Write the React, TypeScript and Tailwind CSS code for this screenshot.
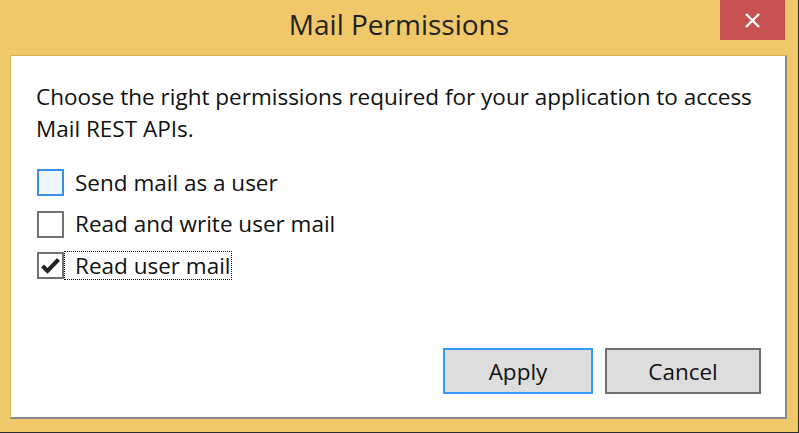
import { useState } from "react";

const permissions = [
  { id: "send", label: "Send mail as a user" },
  { id: "readwrite", label: "Read and write user mail" },
  { id: "read", label: "Read user mail" },
];

const CheckBox = ({ checked, hover }: { checked: boolean; hover: boolean }) => (
  <span
    className={
      hover
        ? "flex h-[27px] w-[27px] shrink-0 items-center justify-center border-2 border-[#3c8fe8] bg-[#f0f6ff]"
        : "flex h-[27px] w-[27px] shrink-0 items-center justify-center border-2 border-[#707070] bg-white"
    }>
    {checked && (
      <svg width="19" height="17" viewBox="0 0 19 17">
        <path
          d="M1.5 9 L6.5 14 L17.5 2.5"
          fill="none"
          stroke="#222"
          strokeWidth="4"
          strokeLinejoin="miter"
        />
      </svg>
    )}
  </span>
);

const App = () => {
  const [checked, setChecked] = useState<Record<string, boolean>>({
    send: false,
    readwrite: false,
    read: true,
  });

  return (
    <div
      className="flex h-[433px] w-[799px] flex-col border-r border-b border-[#2b2b2b] bg-[#f0c86a] text-[#111]"
      style={{ fontFamily: '"Open Sans", "Noto Sans", sans-serif' }}>
      <div className="relative flex h-[55px] shrink-0 items-start justify-center">
        <h1 className="pt-[6px] text-[28px] leading-[36px] text-[#222]">
          Mail Permissions
        </h1>
        <button className="absolute top-0 right-[13px] flex h-[40px] w-[65px] items-center justify-center bg-[#c75050]">
          <svg width="15" height="15" viewBox="0 0 15 15">
            <path
              d="M1 1 L14 14 M14 1 L1 14"
              stroke="#fff"
              strokeWidth="2.4"
            />
          </svg>
        </button>
      </div>

      <div className="ml-[10px] mr-[11px] flex h-[364px] shrink-0 flex-col border-t border-l border-[#d6b25e] border-r-2 border-b-2 border-r-[#8a8a8a] border-b-[#8a8a8a] bg-white">
        <p className="pt-[25px] pl-[25px] text-[22.5px] leading-[31.5px]">
          Choose the right permissions required for your application to
          access
          <br />
          Mail REST APIs.
        </p>

        <ul className="mt-[24px] flex flex-col gap-[12.5px] pl-[26px]">
          {permissions.map((item, index) => (
            <li
              key={item.id}
              className="flex h-[29px] cursor-default items-center"
              onClick={() =>
                setChecked((prev) => ({ ...prev, [item.id]: !prev[item.id] }))
              }>
              <CheckBox checked={checked[item.id]} hover={index === 0} />
              <span
                className={
                  item.id === "read"
                    ? "flex h-[29px] items-center border border-dotted border-[#111] pl-[10px] text-[22.5px]"
                    : "flex h-[29px] items-center border border-transparent pl-[10px] text-[22.5px]"
                }>
                {item.label}
              </span>
            </li>
          ))}
        </ul>

        <div className="mt-auto flex justify-end gap-[12px] pr-[24px] pb-[23px]">
          <button className="h-[46px] w-[150px] border-2 border-[#3399ff] bg-[#dddddd] pt-[2px] text-[22.5px]">
            Apply
          </button>
          <button className="h-[46px] w-[156px] border-2 border-[#707070] bg-[#dddddd] pt-[2px] text-[22.5px]">
            Cancel
          </button>
        </div>
      </div>
    </div>
  );
};

export default App;
